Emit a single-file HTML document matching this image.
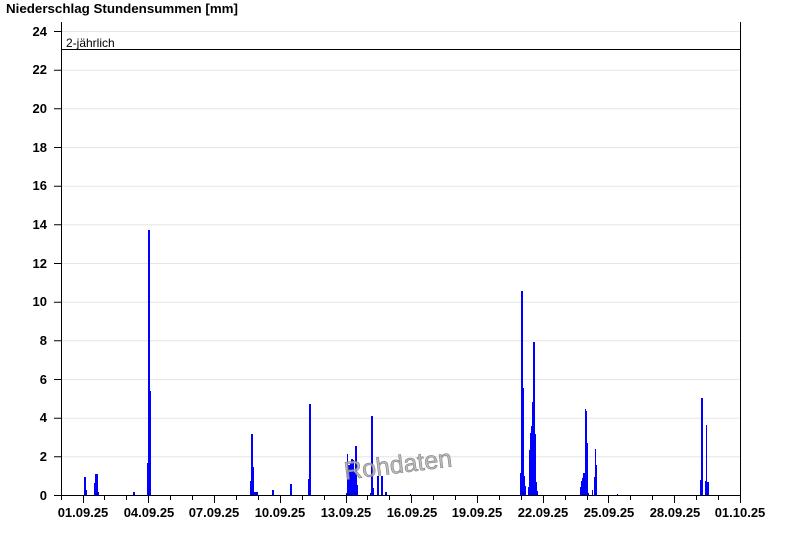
<!DOCTYPE html>
<html><head><meta charset="utf-8"><style>
html,body{margin:0;padding:0;background:#fff;width:800px;height:550px;overflow:hidden}
svg text{font-family:"Liberation Sans",Arial,sans-serif}
</style></head><body>
<svg width="800" height="550" viewBox="0 0 800 550" xmlns="http://www.w3.org/2000/svg">
<text x="6" y="13" font-size="13" font-weight="bold" fill="#000" textLength="232" lengthAdjust="spacingAndGlyphs">Niederschlag Stundensummen [mm]</text>
<g stroke="#e6e6e6" stroke-width="1">
<line x1="61" y1="456.8" x2="740" y2="456.8"/><line x1="61" y1="418.2" x2="740" y2="418.2"/>
<line x1="61" y1="379.5" x2="740" y2="379.5"/><line x1="61" y1="340.8" x2="740" y2="340.8"/>
<line x1="61" y1="302.2" x2="740" y2="302.2"/><line x1="61" y1="263.5" x2="740" y2="263.5"/>
<line x1="61" y1="224.8" x2="740" y2="224.8"/><line x1="61" y1="186.2" x2="740" y2="186.2"/>
<line x1="61" y1="147.5" x2="740" y2="147.5"/><line x1="61" y1="108.8" x2="740" y2="108.8"/>
<line x1="61" y1="70.2" x2="740" y2="70.2"/><line x1="61" y1="31.5" x2="740" y2="31.5"/>
</g>
<g fill="#0000ff">
<rect x="84" y="477" width="2" height="18"/><rect x="86" y="490" width="1" height="5"/>
<rect x="94" y="483" width="1" height="12"/><rect x="95" y="474" width="3" height="21"/><rect x="98" y="492" width="1" height="3"/>
<rect x="133" y="492" width="2" height="3"/>
<rect x="147" y="463" width="1" height="32"/><rect x="148" y="230" width="2" height="265"/><rect x="150" y="391" width="1" height="104"/>
<rect x="250" y="481" width="1" height="14"/><rect x="251" y="434" width="2" height="61"/><rect x="253" y="467" width="1" height="28"/><rect x="254" y="492" width="4" height="3"/>
<rect x="272" y="490" width="2" height="5"/>
<rect x="290" y="484" width="2" height="11"/>
<rect x="308" y="479" width="1" height="16"/><rect x="309" y="404" width="2" height="91"/>
<rect x="346" y="493" width="1" height="2"/><rect x="347" y="454" width="1" height="41"/><rect x="348" y="465" width="2" height="30"/><rect x="350" y="463" width="1" height="32"/><rect x="351" y="459" width="2" height="36"/><rect x="353" y="460" width="1" height="35"/><rect x="354" y="472" width="1" height="23"/><rect x="355" y="446" width="2" height="49"/><rect x="357" y="485" width="1" height="10"/>
<rect x="370" y="493" width="1" height="2"/><rect x="371" y="416" width="2" height="79"/><rect x="373" y="488" width="1" height="7"/>
<rect x="377" y="476" width="2" height="19"/><rect x="381" y="476" width="2" height="19"/><rect x="385" y="492" width="2" height="3"/>
<rect x="410" y="494" width="1" height="1"/>
<rect x="520" y="473" width="1" height="22"/><rect x="521" y="291" width="2" height="204"/><rect x="523" y="388" width="1" height="107"/><rect x="524" y="476" width="1" height="19"/><rect x="525" y="486" width="1" height="9"/>
<rect x="528" y="487" width="1" height="8"/><rect x="529" y="450" width="1" height="45"/><rect x="530" y="433" width="1" height="62"/><rect x="531" y="426" width="1" height="69"/><rect x="532" y="402" width="1" height="93"/><rect x="533" y="342" width="2" height="153"/><rect x="535" y="434" width="1" height="61"/><rect x="536" y="482" width="1" height="13"/><rect x="537" y="491" width="1" height="4"/>
<rect x="580" y="487" width="1" height="8"/><rect x="581" y="481" width="1" height="14"/><rect x="582" y="478" width="1" height="17"/><rect x="583" y="473" width="2" height="22"/><rect x="585" y="409" width="1" height="86"/><rect x="586" y="411" width="1" height="84"/><rect x="587" y="443" width="1" height="52"/><rect x="588" y="493" width="1" height="2"/>
<rect x="592" y="490" width="1" height="5"/><rect x="594" y="477" width="1" height="18"/><rect x="595" y="449" width="1" height="46"/><rect x="596" y="465" width="1" height="30"/>
<rect x="617" y="494" width="1" height="1"/>
<rect x="700" y="480" width="1" height="15"/><rect x="701" y="398" width="2" height="97"/><rect x="705" y="481" width="1" height="14"/><rect x="706" y="425" width="1" height="70"/><rect x="707" y="482" width="2" height="13"/>
</g>
<line x1="61" y1="49.5" x2="740" y2="49.5" stroke="#000" stroke-width="1"/>
<text x="66" y="47" font-size="12" fill="#000">2-jährlich</text>
<text x="399" y="473" font-size="25" fill="#b0b0b0" fill-opacity="0.85" stroke="#808080" stroke-width="0.6" text-anchor="middle" transform="rotate(-7 399 473)">Rohdaten</text>
<g stroke="#000" stroke-width="1" fill="none">
<line x1="61.5" y1="22" x2="61.5" y2="496"/>
<line x1="740.5" y1="22" x2="740.5" y2="496"/>
<line x1="61" y1="495.5" x2="741" y2="495.5"/>
<path d="M54 495.5H61M54 456.8H61M54 418.2H61M54 379.5H61M54 340.8H61M54 302.2H61M54 263.5H61M54 224.8H61M54 186.2H61M54 147.5H61M54 108.8H61M54 70.2H61M54 31.5H61"/>
</g>
<g font-size="13" font-weight="bold" text-anchor="end" fill="#000">
<text x="47" y="500">0</text><text x="47" y="461">2</text><text x="47" y="422">4</text><text x="47" y="384">6</text>
<text x="47" y="345">8</text><text x="47" y="306">10</text><text x="47" y="268">12</text><text x="47" y="229">14</text>
<text x="47" y="190">16</text><text x="47" y="152">18</text><text x="47" y="113">20</text><text x="47" y="74">22</text><text x="47" y="36">24</text>
</g>
<g font-size="13" font-weight="bold" text-anchor="middle" fill="#000">
<text x="83" y="517">01.09.25</text><text x="149" y="517">04.09.25</text><text x="214" y="517">07.09.25</text>
<text x="280" y="517">10.09.25</text><text x="346" y="517">13.09.25</text><text x="412" y="517">16.09.25</text>
<text x="477" y="517">19.09.25</text><text x="543" y="517">22.09.25</text><text x="609" y="517">25.09.25</text>
<text x="675" y="517">28.09.25</text><text x="740" y="517">01.10.25</text>
</g>
<g stroke="#000" stroke-width="1">
<path d="M61.5 495V500M83.5 495V503M104.5 495V500M126.5 495V500M148.5 495V503M170.5 495V500M192.5 495V500M214.5 495V503M236.5 495V500M258.5 495V500M280.5 495V503M302.5 495V500M324.5 495V500M346.5 495V503M367.5 495V500M389.5 495V500M411.5 495V503M433.5 495V500M455.5 495V500M477.5 495V503M499.5 495V500M521.5 495V500M543.5 495V503M565.5 495V500M587.5 495V500M608.5 495V503M630.5 495V500M652.5 495V500M674.5 495V503M696.5 495V500M718.5 495V500M740.5 495V503"/>
</g>
</svg>
</body></html>
